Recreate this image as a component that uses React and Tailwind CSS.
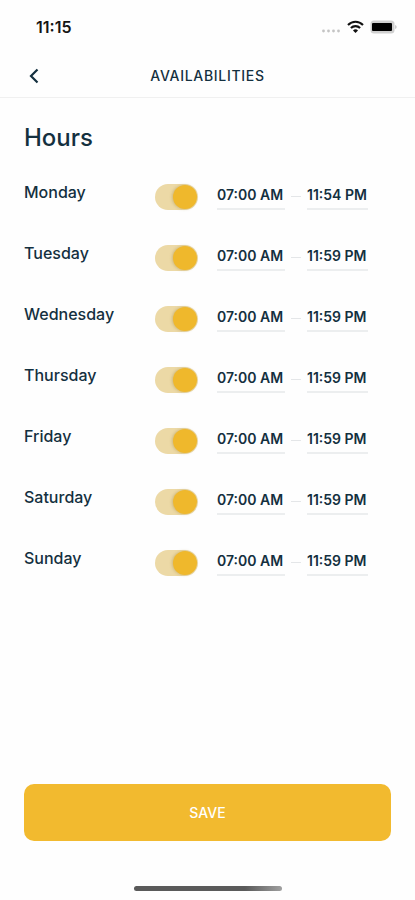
import { useState } from 'react';

const initialHours = [
  { day: 'Monday', from: '07:00 AM', to: '11:54 PM', enabled: true },
  { day: 'Tuesday', from: '07:00 AM', to: '11:59 PM', enabled: true },
  { day: 'Wednesday', from: '07:00 AM', to: '11:59 PM', enabled: true },
  { day: 'Thursday', from: '07:00 AM', to: '11:59 PM', enabled: true },
  { day: 'Friday', from: '07:00 AM', to: '11:59 PM', enabled: true },
  { day: 'Saturday', from: '07:00 AM', to: '11:59 PM', enabled: true },
  { day: 'Sunday', from: '07:00 AM', to: '11:59 PM', enabled: true },
];

function StatusBar() {
  return (
    <div className="flex h-[54px] items-center justify-between pr-[18px] pl-9 text-[#151515]">
      <span className="text-base font-semibold">11:15</span>
      <div className="flex items-center gap-[6px]">
        <svg width="20" height="14" viewBox="0 0 20 14" fill="#c4c4c4">
          <circle cx="2.5" cy="11" r="1.4" />
          <circle cx="7.5" cy="11" r="1.4" />
          <circle cx="12.5" cy="11" r="1.4" />
          <circle cx="17.5" cy="11" r="1.4" />
        </svg>
        <svg width="17" height="14" viewBox="0 0 17 14" fill="none" stroke="#111" strokeWidth="2.1">
          <path d="M1 4.9C5.2 0.6 11.8 0.6 16 4.9" />
          <path d="M3.9 8.1C6.5 5.5 10.5 5.5 13.1 8.1" />
          <path d="M6 10.4C7.4 9 9.6 9 11 10.4L8.5 13Z" fill="#111" stroke="none" />
        </svg>
        <svg width="27" height="14" viewBox="0 0 27 14">
          <rect x="0.5" y="0.5" width="24" height="13" rx="3.5" fill="#cfcfcf" />
          <path d="M25.5 5C26.7 5.6 26.7 8.4 25.5 9Z" fill="#9a9a9a" />
          <rect x="2" y="3" width="20" height="8" rx="1" fill="#000" />
        </svg>
      </div>
    </div>
  );
}

function TimeButton({ label, time }) {
  return (
    <button
      type="button"
      aria-label={`${label} ${time}`}
      className="border-b-2 border-[#eceeef] pb-[2px] text-left text-sm leading-[22px] font-semibold whitespace-nowrap"
    >
      {time}
    </button>
  );
}

function DayRow({ item, onToggle }) {
  const inputId = `toggle-${item.day}`;

  return (
    <li className="flex h-[61px] items-start">
      <label htmlFor={inputId} className="w-[131px] shrink-0 text-base leading-6 font-medium">
        {item.day}
      </label>
      <input
        id={inputId}
        type="checkbox"
        checked={item.enabled}
        onChange={onToggle}
        className="mt-1 h-[26px] w-[43px] shrink-0 cursor-pointer appearance-none rounded-full bg-gray-200 p-px before:block before:size-6 before:rounded-full before:bg-gray-400 checked:bg-[#ecd9a6] checked:before:ml-auto checked:before:bg-[#efb82c] checked:before:shadow-[-1px_0_3px_rgba(150,120,40,0.35)]"
      />
      <div className="mt-1 ml-[19px] grid grid-cols-[68px_10px_61px] items-start gap-[6px]">
        <TimeButton label={`${item.day} from`} time={item.from} />
        <span className="mt-3 h-px bg-[#e4e6e8]" />
        <TimeButton label={`${item.day} to`} time={item.to} />
      </div>
    </li>
  );
}

export default function App() {
  const [hours, setHours] = useState(initialHours);

  const toggleDay = (day) => {
    setHours(hours.map((h) => (h.day === day ? { ...h, enabled: !h.enabled } : h)));
  };

  return (
    <div className="flex min-h-screen flex-col bg-[#fefefe] font-['Inter',sans-serif] text-[#14303f]">
      <StatusBar />

      <header className="grid h-11 grid-cols-[1fr_auto_1fr] items-center border-b border-[#f0f0f0] px-6">
        <button type="button" aria-label="Back" className="flex h-6 w-6 items-center pl-1">
          <svg width="12" height="16" viewBox="0 0 12 16" fill="none" stroke="currentColor" strokeWidth="2.2">
            <path d="M9.5 1.5L3 8L9.5 14.5" />
          </svg>
        </button>
        <h1 className="text-sm font-medium tracking-wider">AVAILABILITIES</h1>
      </header>

      <main className="flex grow flex-col px-6 pt-6">
        <h2 className="text-2xl leading-8 font-medium">Hours</h2>
        <ul className="mt-[26px]">
          {hours.map((item) => (
            <DayRow key={item.day} item={item} onToggle={() => toggleDay(item.day)} />
          ))}
        </ul>
        <button
          type="button"
          className="mt-auto h-[57px] w-full rounded-[10px] bg-[#f2ba2f] text-sm font-medium text-white active:bg-[#e5ac20]"
        >
          SAVE
        </button>
      </main>

      <footer className="flex h-[59px] items-end justify-center pb-[9px]">
        <div className="h-[5px] w-[148px] rounded-full bg-linear-to-r from-[#5a5a5a] from-75% to-[#a0a0a0]" />
      </footer>
    </div>
  );
}
